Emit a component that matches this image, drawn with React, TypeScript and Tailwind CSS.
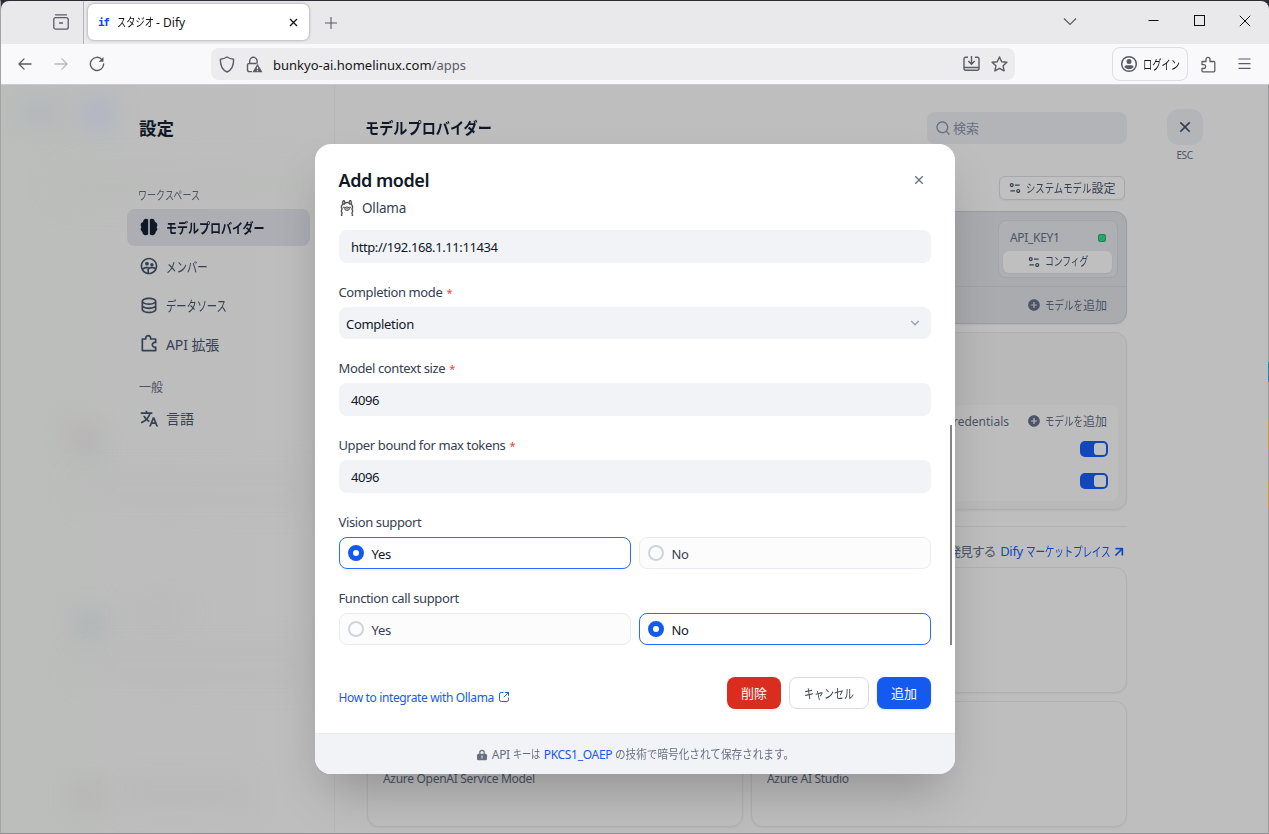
import type { ReactNode } from 'react';
import {
  RiAddCircleFill,
  RiArrowDownSLine,
  RiArrowRightUpLine,
  RiBrain2Fill,
  RiCloseLine,
  RiDatabase2Line,
  RiEqualizer2Line,
  RiGroup2Line,
  RiPuzzle2Line,
  RiSearchLine,
  RiTranslate2,
} from 'react-icons/ri';
import { SiOllama } from 'react-icons/si';

const WORKSPACE_ITEMS = [
  { label: 'モデルプロバイダー', icon: RiBrain2Fill, active: true, fit: 'scale-x-[.79]' },
  { label: 'メンバー', icon: RiGroup2Line, active: false, fit: 'scale-x-[.75]' },
  { label: 'データソース', icon: RiDatabase2Line, active: false, fit: 'scale-x-[.735]' },
  { label: 'API 拡張', icon: RiPuzzle2Line, active: false, fit: 'scale-x-100' },
];

// Condensed kana: `box` is the width it takes in the line, `fit` the squeeze
function Kana({ box, fit, children }: { box: string; fit: string; children: ReactNode }) {
  return (
    <span className={`inline-block whitespace-nowrap ${box}`}>
      <span className={`inline-block origin-left ${fit}`}>{children}</span>
    </span>
  );
}

function TitleBar() {
  return (
    <div className="flex h-[43px] shrink-0 rounded-t-lg bg-[#e9e9eb]">
      <div className="flex w-[83px] items-center justify-end border-r border-[#b5b5b9] pr-[14px]">
        <svg className="-mt-px" width="16" height="16" viewBox="0 0 16 16" fill="none" stroke="#5b5b66" strokeWidth="1.3" strokeLinecap="round">
          <path d="M2.5 .8h11" />
          <rect x=".8" y="3.6" width="14.4" height="11.6" rx="2" />
          <path d="M6.500 9h3" />
        </svg>
      </div>
      <div className="ml-[4px] mt-[3px] flex h-9 w-[221px] items-center rounded-md bg-white pl-[10px] pr-[9px] shadow-[0_0_3px_rgba(0,0,0,0.4)]">
        <span className="w-[11px] font-['DejaVu_Sans_Mono'] text-[11px] font-bold leading-none tracking-[-1.4px] text-[#1341f5]">if</span>
        <span className="ml-2 mt-px flex-1 whitespace-nowrap text-[12px] text-[#15141a]">
          <Kana box="w-9" fit="scale-x-[.77]">スタジオ</Kana> - Dify
        </span>
        <svg width="13" height="13" viewBox="0 0 13 13" stroke="#15141a" strokeWidth="1.3">
          <path d="m3 3 7 7M10 3l-7 7" />
        </svg>
      </div>
      <svg className="ml-[15px] mt-[15px]" width="14" height="14" viewBox="0 0 14 14" stroke="#5b5b66" strokeWidth="1.1">
        <path d="M7 1v12M1 7h12" />
      </svg>
      <div className="ml-auto flex items-start pr-px pt-[11px]">
        <svg className="mr-[71px] mt-[5px]" width="14" height="10" viewBox="0 0 14 10" fill="none" stroke="#5b5b66" strokeWidth="1.2">
          <path d="m1 1.5 6 6 6-6" />
        </svg>
        <svg className="mr-[35px] mt-[3px]" width="11" height="11" viewBox="0 0 11 11" stroke="#111">
          <path d="M.5 5.5h10" />
        </svg>
        <svg className="mr-[34px] mt-[3px]" width="11" height="11" viewBox="0 0 11 11" fill="none" stroke="#111">
          <rect x=".5" y=".5" width="10" height="10" />
        </svg>
        <svg className="mr-[17px] mt-[3px]" width="12" height="12" viewBox="0 0 12 12" stroke="#111">
          <path d="m.8.8 10.4 10.4M11.2.8.8 11.2" />
        </svg>
      </div>
    </div>
  );
}

function AddressBar() {
  return (
    <div className="flex h-[41px] shrink-0 items-center border-b border-[#cbcbcd] bg-[#f9f9fb] text-[#5b5b66]">
      <svg className="ml-[17px]" width="14" height="14" viewBox="0 0 15 14" fill="none" stroke="currentColor" strokeWidth="1.4" strokeLinecap="round" strokeLinejoin="round">
        <path d="M14 7H1M6.5 1.5 1 7l5.5 5.5" />
      </svg>
      <svg className="ml-[22px] text-[#b9b9be]" width="14" height="14" viewBox="0 0 15 14" fill="none" stroke="currentColor" strokeWidth="1.4" strokeLinecap="round" strokeLinejoin="round">
        <path d="M1 7h13M8.5 1.5 14 7l-5.5 5.5" />
      </svg>
      <svg className="ml-[21px]" width="16" height="16" viewBox="0 0 16 16" fill="none" stroke="currentColor" strokeWidth="1.4" strokeLinecap="round">
        <path d="M13 3.6A6.6 6.6 0 1 0 14.6 8" />
        <path d="M14.5 1v4.8H9.7z" fill="currentColor" stroke="none" />
      </svg>
      <div className="ml-[106px] flex h-8 w-[804px] items-center rounded-lg bg-[#ececee] px-2">
        <svg width="16" height="17" viewBox="0 0 16 17" fill="none" stroke="currentColor" strokeWidth="1.4" strokeLinejoin="round">
          <path d="M8 1c2 1.3 4.2 2 6.6 2.2C14.8 9 13 13.7 8 16 3 13.7 1.2 9 1.4 3.2 3.8 3 6 2.3 8 1z" />
        </svg>
        <svg className="ml-[11px]" width="17" height="17" viewBox="0 0 17 17" fill="none" stroke="currentColor" strokeWidth="1.4">
          <path d="M3.7 7.5V5a3.7 3.7 0 0 1 7.4 0v2.500M6 15.600H3a1.500 1.500 0 0 1-1.500-1.500V9A1.500 1.500 0 0 1 3 7.500h7.500" />
          <path d="m11.5 7.800 5 8.400h-10z" fill="currentColor" stroke="none" />
          <path d="M11.5 10.700v2.600M11.500 14.200v1.100" stroke="#ececee" strokeWidth="1.2" />
        </svg>
        <span className="ml-[10px] mt-[3px] whitespace-nowrap text-[13px] text-[#15141a]">
          bunkyo-ai.homelinux.com<span className="text-[#5b5b66]">/apps</span>
        </span>
        <svg className="ml-auto" width="17" height="16" viewBox="0 0 17 16" fill="none" stroke="currentColor" strokeWidth="1.4">
          <path d="M5 1.2H2.500A1.500 1.500 0 0 0 1 2.700v10A1.500 1.500 0 0 0 2.500 14.200h12a1.500 1.500 0 0 0 1.500-1.500v-10a1.500 1.500 0 0 0-1.500-1.500H12M1 11.500h15M8.500 0v8M5.300 5l3.200 3.200L11.700 5" />
        </svg>
        <svg className="-mr-px ml-[11px]" width="17" height="16" viewBox="0 0 17 16" fill="none" stroke="currentColor" strokeWidth="1.4" strokeLinejoin="round">
          <path d="m8.5 1 2.200 4.700 5.200.6-3.800 3.500 1 5.100-4.600-2.500-4.600 2.500 1-5.100L1.100 6.300l5.200-.6z" />
        </svg>
      </div>
      <div className="ml-[97px] flex h-[34px] w-[76px] items-center rounded-lg border border-[#dedee1] pl-[7px]">
        <svg width="18" height="18" viewBox="0 0 18 18" fill="currentColor">
          <circle cx="9" cy="9" r="7.3" fill="none" stroke="currentColor" strokeWidth="1.5" />
          <circle cx="9" cy="6.6" r="2.5" />
          <path d="M4.5 12.300c0-1.300.8-2 2-2h5c1.200 0 2 .7 2 2-2.500 2.600-6.500 2.600-9 0z" />
        </svg>
        <span className="ml-[5px] mt-px text-[13px] text-[#15141a]">
          <Kana box="w-9" fit="scale-x-[.71]">ログイン</Kana>
        </span>
      </div>
      <svg className="ml-[13px]" width="15" height="17" viewBox="0 0 15 17" fill="none" stroke="currentColor" strokeWidth="1.3" strokeLinejoin="round">
        <path d="M1 5.5h4V3.300a2 2 0 0 1 4 0v2.200h3.800a1 1 0 0 1 1 1v8.300a1 1 0 0 1-1 1H2a1 1 0 0 1-1-1v-2.300h1.700a1.900 1.900 0 0 0 0-3.800H1z" />
      </svg>
      <svg className="ml-[22px]" width="13" height="12" viewBox="0 0 13 12" stroke="currentColor" strokeWidth="1.2">
        <path d="M.5 1h12M.5 5.700h12M.5 10.400h12" />
      </svg>
    </div>
  );
}

// Soft spots of the page that lies behind the settings sheet
function Backdrop() {
  return (
    <div className="pointer-events-none absolute inset-0 overflow-hidden">
      <div className="absolute left-4 top-4 h-6 w-12 rounded-full bg-[#aeb1ba]/60 blur-md" />
      <div className="absolute left-[82px] top-3 size-8 rounded-full bg-[#a3add0]/60 blur-md" />
      <div className="absolute left-[60px] top-[90px] h-5 w-[260px] bg-[#b7b9b7]/40 blur-lg" />
      <div className="absolute left-[66px] top-[336px] size-7 rounded-full bg-[#b6abaa]/50 blur-md" />
      <div className="absolute left-[82px] top-[352px] size-5 rounded-full bg-[#a9a9b8]/50 blur-md" />
      <div className="absolute left-[80px] top-[396px] h-4 w-[240px] bg-[#b5b5b5]/40 blur-lg" />
      <div className="absolute left-[74px] top-[524px] size-7 rounded-full bg-[#a4adb3]/60 blur-md" />
      <div className="absolute left-[128px] top-[518px] h-4 w-14 bg-[#b5b5b5]/50 blur-md" />
      <div className="absolute left-[80px] top-[572px] h-4 w-[240px] bg-[#b5b5b5]/40 blur-lg" />
      <div className="absolute left-[72px] top-[698px] size-7 rounded-full bg-[#b0aba6]/50 blur-md" />
      <div className="absolute left-[120px] top-[698px] h-5 w-[130px] bg-[#b6b6b6]/60 blur-md" />
    </div>
  );
}

function Sidebar() {
  return (
    <aside className="relative w-[334px] shrink-0 border-r border-[#b5b7b6] bg-linear-to-r from-[#bbbebb] via-[#bdbdbd] to-[#bdbebd] pl-[126px] pr-6">
      <Backdrop />
      <div className="relative">
        <h1 className="ml-3 pt-[29px] text-[17.5px] font-semibold leading-7 text-[#101828]">設定</h1>
        <p className="ml-[11px] mt-[46px] text-[12px] leading-4 text-[#4c5567]">
          <Kana box="w-[62px]" fit="scale-x-[.755]">ワークスペース</Kana>
        </p>
        <nav className="mt-[5px] flex flex-col gap-[2px]">
          {WORKSPACE_ITEMS.map(({ label, icon: Icon, active, fit }) => (
            <a
              key={label}
              className={`flex h-[37px] w-[183px] items-center rounded-lg pl-3 text-[14px] ${active ? 'bg-[#adaeb3] font-semibold text-[#101828]' : 'text-[#354052]'}`}
            >
              <Icon className="-mt-px size-5 shrink-0" />
              <span className="-mt-px ml-[7px] tracking-[-0.1px]">
                <Kana box="w-[100px]" fit={fit}>{label}</Kana>
              </span>
            </a>
          ))}
        </nav>
        <p className="ml-3 mt-[17px] text-[12px] leading-4 text-[#4c5567]">一般</p>
        <a className="mt-[4px] flex h-[37px] items-center pl-3 text-[14px] text-[#354052]">
          <RiTranslate2 className="size-5" />
          <span className="ml-[7px]">言語</span>
        </a>
      </div>
    </aside>
  );
}

function AddModelLink() {
  return (
    <div className="flex items-center text-[#4c5567]">
      <RiAddCircleFill className="size-[14px]" />
      <span className="ml-[4px] mt-px whitespace-nowrap text-[12px]">
        <Kana box="w-[38px]" fit="scale-x-[.79]">モデルを</Kana>追加
      </span>
    </div>
  );
}

function Toggle() {
  return (
    <div className="flex h-4 w-7 justify-end rounded-[5px] bg-[#1047bd] p-[2px]">
      <div className="h-3 w-3 rounded-[3px] bg-[#bfbfbf]" />
    </div>
  );
}

function Providers() {
  return (
    <main className="relative flex w-[792px] shrink-0 flex-col pl-[32px]">
      <div className="mt-[27px] flex h-8 items-center justify-between">
        <h2 className="-ml-[2px] text-[16px] font-semibold text-[#101828]">
          <Kana box="w-[127px]" fit="scale-x-[.885]">モデルプロバイダー</Kana>
        </h2>
        <div className="flex h-8 w-[200px] items-center rounded-lg bg-[#b2b4b7] pl-2 text-[#687083]">
          <RiSearchLine className="size-4" />
          <span className="ml-[2px] mt-px text-[13px]">検索</span>
        </div>
      </div>
      <div className="mr-[2px] mt-8 flex h-6 w-[126px] shrink-0 items-center justify-center self-end rounded-md border border-[#a5a8ad] bg-[#c0c0c0] text-[#354052] shadow-xs">
        <RiEqualizer2Line className="size-[14px]" />
        <span className="ml-1 mt-px whitespace-nowrap text-[12px]">
          <Kana box="w-[65px]" fit="scale-x-[.78]">システムモデル</Kana>設定
        </span>
      </div>

      <div className="mt-[11px] h-[113px] shrink-0 rounded-xl border border-[#9b9da2] bg-[#a9abae] shadow-xs">
        <div className="flex h-[75px] justify-end border-b border-[#a0a2a6] pr-[8px] pt-2">
          <div className="h-[58px] w-[120px] rounded-lg border border-[#a1a4a8] bg-[#aeb0b3] pl-1 pr-[5px]">
            <div className="flex h-[30px] items-center justify-between pl-[7px] pr-[6px] pt-1">
              <span className="text-[12px] tracking-[-0.3px] text-[#4c5567]">API_KEY1</span>
              <span className="size-2 rounded-[2px] border border-[#168a53] bg-[#2da368]" />
            </div>
            <div className="flex h-[22px] items-center justify-center rounded-md bg-[#bfbfbf] text-[#354052] shadow-xs">
              <RiEqualizer2Line className="size-[14px]" />
              <span className="ml-1 text-[12px]">
                <Kana box="w-[44px]" fit="scale-x-[.73]">コンフィグ</Kana>
              </span>
            </div>
          </div>
        </div>
        <div className="flex h-9 items-center justify-end pr-[19px]">
          <AddModelLink />
        </div>
      </div>

      <div className="mt-2 h-[178px] shrink-0 rounded-xl border border-[#afb0b2] bg-[#b9b9ba] pr-2 pt-[72px] shadow-xs">
        <div className="ml-auto h-24 rounded-lg bg-[#bdbdbd] pr-[10px]">
          <div className="flex h-8 items-center justify-end pr-px text-[#4c5567]">
            <span className="mr-[18px] mt-px text-[12px]">Credentials</span>
            <AddModelLink />
          </div>
          <div className="flex flex-col items-end gap-4 pt-1">
            <Toggle />
            <Toggle />
          </div>
        </div>
      </div>

      <div className="mt-4 h-px shrink-0 bg-[#b1b1b3]" />
      <div className="flex h-[40px] shrink-0 items-center justify-end pt-[10px] text-[13px] text-[#4c5567]">
        <span className="whitespace-nowrap tracking-[-1.3px]">もっと発見する</span>
        <span className="ml-[5px] whitespace-nowrap tracking-[-0.3px] text-[#1047bd]">
          Dify <Kana box="w-[85px]" fit="scale-x-[.74]">マーケットプレイス</Kana>
        </span>
        <RiArrowRightUpLine className="size-4 stroke-[0.5px] text-[#1047bd]" />
      </div>

      <div className="h-[126px] shrink-0 rounded-xl border border-[#b1b1b3] bg-[#bebebe] shadow-xs" />
      <div className="mt-2 grid shrink-0 grid-cols-2 gap-2">
        {['Azure OpenAI Service Model', 'Azure AI Studio'].map(name => (
          <div key={name} className="h-[126px] rounded-xl border border-[#b1b1b3] bg-[#bebebe] px-[15px] pt-[69px] text-[12px] leading-4 tracking-[-0.3px] text-[#4c5567] shadow-xs">
            {name}
          </div>
        ))}
      </div>
    </main>
  );
}

function Label({ children, required = false }: { children: ReactNode; required?: boolean }) {
  return (
    <div className="mb-[4px] ml-[-0.5px] flex h-5 items-center text-[13px] tracking-[-0.38px] text-[#354052]">
      {children}
      {required && <span className="ml-1 text-[11px] text-[#f04438]">*</span>}
    </div>
  );
}

function TextInput({ value }: { value: string }) {
  return (
    <div className="flex h-[33px] items-center rounded-lg bg-[#f1f3f7] px-3 pt-[2px] text-[13px] tracking-[-0.4px] text-[#101828]">
      {value}
    </div>
  );
}

function RadioOption({ label, checked }: { label: string; checked: boolean }) {
  return (
    <div className={`flex h-8 items-center rounded-lg border pl-2 text-[13px] ${checked ? 'border-[#296dff] bg-white text-[#101828] shadow-xs' : 'border-[#e9ebf0] bg-[#fcfcfd] text-[#354052]'}`}>
      <span className={`size-4 rounded-full ${checked ? 'border-[5px] border-[#155aef]' : 'border-2 border-[#d0d5dc]'}`} />
      <span className="ml-[7.5px] mt-[3px] tracking-[-0.3px]">{label}</span>
    </div>
  );
}

function RadioGroup({ value }: { value: 'Yes' | 'No' }) {
  return (
    <div className="grid grid-cols-2 gap-2">
      <RadioOption label="Yes" checked={value === 'Yes'} />
      <RadioOption label="No" checked={value === 'No'} />
    </div>
  );
}

function AddModelDialog() {
  return (
    <div className="relative flex h-[630px] w-[640px] flex-col overflow-hidden rounded-2xl bg-white shadow-2xl">
      <div className="flex h-[50px] items-center justify-between px-6 pt-[22px]">
        <h3 className="-mt-px -ml-[0.5px] text-[18px] font-semibold leading-7 tracking-[-0.45px] text-[#101828]">Add model</h3>
        <RiCloseLine className="mr-1 size-4 text-[#676f83]" />
      </div>
      <div className="flex h-7 items-center px-6 text-[#354052]">
        <SiOllama className="size-4 stroke-[0.6px] text-[#444]" />
        <span className="ml-[7px] mt-px text-[13.5px] tracking-[-0.2px]">Ollama</span>
      </div>

      <form className="flex flex-col px-6 pt-2">
        <TextInput value="http://192.168.1.11:11434" />
        <div className="mt-[20px]">
          <Label required>Completion mode</Label>
          <div className="flex h-8 items-center justify-between rounded-lg bg-[#f1f3f7] pl-[7px] pr-2 text-[13px] tracking-[-0.3px] text-[#101828]">
            <span className="mt-[3px]">Completion</span>
            <RiArrowDownSLine className="size-4 text-[#98a2b2]" />
          </div>
        </div>
        <div className="mt-[20px]">
          <Label required>Model context size</Label>
          <TextInput value="4096" />
        </div>
        <div className="mt-[20px]">
          <Label required>Upper bound for max tokens</Label>
          <TextInput value="4096" />
        </div>
        <div className="mt-[20px]">
          <Label>Vision support</Label>
          <RadioGroup value="Yes" />
        </div>
        <div className="mt-[20px]">
          <Label>Function call support</Label>
          <RadioGroup value="No" />
        </div>
      </form>
      <div className="absolute right-[3px] top-[281px] h-[220px] w-[2px] bg-[#858585]" />

      <div className="flex items-center px-6 pt-8">
        <a className="mt-[9px] ml-[-0.5px] flex flex-1 items-center text-[12px] tracking-[-0.36px] text-[#155aef]">
          How to integrate with Ollama
          <svg className="-mt-px ml-1" width="12" height="12" viewBox="0 0 12 12" fill="none" stroke="currentColor" strokeLinecap="round" strokeLinejoin="round">
            <path d="M10.5 4.500v-3h-3M10.500 1.500 6 6M5 1.500H3.300A1.800 1.800 0 0 0 1.500 3.300v5.400a1.800 1.800 0 0 0 1.800 1.800h5.400a1.800 1.800 0 0 0 1.800-1.800V7" />
          </svg>
        </a>
        <div className="flex gap-2 text-[13px]">
          <button type="button" className="h-8 w-[54px] rounded-lg bg-[#d92d20] pt-[2px] text-white">削除</button>
          <button type="button" className="h-8 w-20 rounded-lg border border-[#dadce2] bg-white pt-[2px] text-[#354052]">
            <Kana box="w-[50px]" fit="scale-x-[.77]">キャンセル</Kana>
          </button>
          <button type="button" className="h-8 w-[54px] rounded-lg bg-[#155aef] pt-[2px] text-white shadow-sm">追加</button>
        </div>
      </div>

      <div className="mt-6 flex flex-1 items-center justify-center border-t border-[#e9ebf0] bg-[#f1f3f7] pt-[2px] text-[12px] text-[#676f83]">
        <svg className="mr-1" width="12" height="12" viewBox="0 0 12 12" fill="currentColor">
          <path d="M3.8 5V3.500a2.200 2.200 0 0 1 4.400 0V5" fill="none" stroke="currentColor" strokeWidth="1.2" />
          <rect x="1" y="4.7" width="10" height="6.5" rx="1.5" />
          <path d="M6 7v2" stroke="#f1f3f7" strokeLinecap="round" />
        </svg>
        <span className="whitespace-nowrap tracking-[-0.3px]">
          API <Kana box="w-[27px]" fit="scale-x-[.77]">キーは</Kana>
        </span>
        <span className="ml-1 mr-[3px] tracking-[-0.3px] text-[#155aef]">PKCS1_OAEP</span>
        <Kana box="w-[179px]" fit="scale-x-[.885]">の技術で暗号化されて保存されます。</Kana>
      </div>
    </div>
  );
}

export default function App() {
  return (
    <div className="flex h-[834px] w-[1269px] flex-col overflow-hidden border-b border-l border-t border-b-[#8e8e90] border-l-[#a3a3a5] border-t-[#2d2c35] bg-[#2d2c35] font-['Noto_Sans','Noto_Sans_CJK_JP',sans-serif]">
      <TitleBar />
      <AddressBar />
      <div className="relative flex min-h-0 flex-1 overflow-hidden bg-[#bebebe]">
        <Sidebar />
        <Providers />
        <div className="ml-10 mt-6 flex w-9 flex-col items-center">
          <button type="button" className="flex size-9 shrink-0 items-center justify-center rounded-xl bg-[#b3b5b8] text-[#354052]">
            <RiCloseLine className="size-5" />
          </button>
          <span className="mr-px mt-[2px] text-[10px] leading-4 tracking-[-0.4px] text-[#4c5567]">ESC</span>
        </div>
        <div className="absolute right-0 top-0 h-full w-px bg-[#9b9b9e]">
          <div className="mt-[277px] h-5 bg-[#2188b6]" />
          <div className="mt-10 h-7 bg-[#c99b32]" />
          <div className="mt-8 h-7 bg-[#c99b32]" />
        </div>
        <div className="absolute inset-0 flex items-start justify-center pt-[59px]">
          <AddModelDialog />
        </div>
      </div>
    </div>
  );
}
